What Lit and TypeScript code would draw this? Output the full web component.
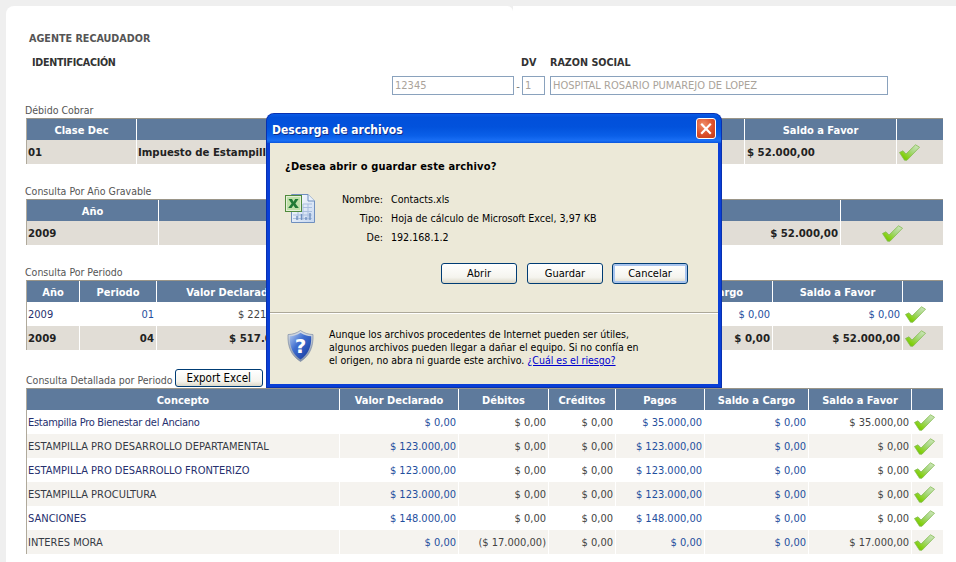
import { LitElement, html, css, svg } from "lit";
import { customElement } from "lit/decorators.js";

const check = () => html`<svg class="ok" width="21" height="17" viewBox="0 0 21 17">
  <defs><linearGradient id="g" x1="1" y1="0" x2="0" y2="1">
    <stop offset="0" stop-color="#d4e8c6"/><stop offset=".4" stop-color="#a8d880"/><stop offset=".75" stop-color="#84d010"/><stop offset="1" stop-color="#62b800"/></linearGradient></defs>
  <path d="M.5 8.5 4 6.8 7 10 16.5.8 20.5 3.2 8 16.2H5.5Z" fill="url(#g)" stroke="#84bb50" stroke-width=".8"/>
</svg>`;

type Cell = { t?: string; c?: string; ok?: boolean };
type Tbl = { cols: number[]; head: string[]; rows: Cell[][]; rowClass?: string[] };

const b = "b", n = "n", d = "d";
const t1: Tbl = {
  cols: [109, 463, 145, 152, 47],
  head: ["Clase Dec", "", "", "Saldo a Favor", ""],
  rowClass: ["strong"],
  rows: [[{ t: "01" }, { t: "Impuesto de Estampilla" }, {}, { t: "$ 52.000,00", c: "s1" }, { ok: true }]],
};
const t2: Tbl = {
  cols: [131, 682, 103],
  head: ["Año", "", ""],
  rowClass: ["strong"],
  rows: [[{ t: "2009" }, { t: "$ 52.000,00", c: "r" }, { ok: true, c: "mid" }]],
};
const t3: Tbl = {
  cols: [52, 77, 148, 108, 100, 124, 136, 130, 41],
  head: ["Año", "Periodo", "Valor Declarado", "", "", "", "Saldo a Cargo", "Saldo a Favor", ""],
  rowClass: ["", "strong"],
  rows: [
    [{ t: "2009", c: n }, { t: "01", c: "r " + b }, { t: "$ 221.000,00", c: "r pv " + d }, {}, {}, {}, { t: "$ 0,00", c: "r " + b }, { t: "$ 0,00", c: "r " + b }, { ok: true }],
    [{ t: "2009" }, { t: "04", c: "r" }, { t: "$ 517.000,00", c: "r pv" }, {}, {}, {}, { t: "$ 0,00", c: "r" }, { t: "$ 52.000,00", c: "r" }, { ok: true }],
  ],
};
const row4 = (name: string, vals: string[], nc = n): Cell[] => [
  { t: name, c: nc },
  { t: vals[0], c: "r " + b }, { t: vals[1], c: "r " + d }, { t: vals[2], c: "r " + d },
  { t: vals[3], c: "r " + b }, { t: vals[4], c: "r " + b }, { t: vals[5], c: "r " + d }, { ok: true },
];
const t4: Tbl = {
  cols: [312, 119, 90, 67, 89, 104, 103, 32],
  head: ["Concepto", "Valor Declarado", "Débitos", "Créditos", "Pagos", "Saldo a Cargo", "Saldo a Favor", ""],
  rowClass: ["", "alt", "", "alt", "", "alt"],
  rows: [
    row4("Estampilla Pro Bienestar del Anciano", ["$ 0,00", "$ 0,00", "$ 0,00", "$ 35.000,00", "$ 0,00", "$ 35.000,00"], "n tight"),
    row4("ESTAMPILLA PRO DESARROLLO DEPARTAMENTAL", ["$ 123.000,00", "$ 0,00", "$ 0,00", "$ 123.000,00", "$ 0,00", "$ 0,00"], "k"),
    row4("ESTAMPILLA PRO DESARROLLO FRONTERIZO", ["$ 123.000,00", "$ 0,00", "$ 0,00", "$ 123.000,00", "$ 0,00", "$ 0,00"]),
    row4("ESTAMPILLA PROCULTURA", ["$ 123.000,00", "$ 0,00", "$ 0,00", "$ 123.000,00", "$ 0,00", "$ 0,00"], "k"),
    row4("SANCIONES", ["$ 148.000,00", "$ 0,00", "$ 0,00", "$ 148.000,00", "$ 0,00", "$ 0,00"]),
    row4("INTERES MORA", ["$ 0,00", "($ 17.000,00)", "$ 0,00", "$ 0,00", "$ 0,00", "$ 17.000,00"], "k"),
  ],
};

const excelIcon = html`<svg width="31" height="31" viewBox="0 0 31 31">
  <defs><linearGradient id="pg" x1="0" y1="0" x2="1" y2="1"><stop offset="0" stop-color="#ffffff"/><stop offset="1" stop-color="#c4d6f0"/></linearGradient></defs>
  <path d="M6.5 1.5H23L29.5 8V29.5H6.5Z" fill="url(#pg)" stroke="#6f8fbe"/>
  <path d="M23 1.5V8H29.5" fill="#e8f0fb" stroke="#6f8fbe"/>
  <path d="M18 11H27M18 14.5H27M8 18.5H27M8 22H27M8 25.5H27M13 18V27M18 11V27M23 11V27" stroke="#a9bfe0" fill="none"/>
  <path d="M12 27V23M16.5 27V21M21 27V24M25 27V20" stroke="#6f8fbe" stroke-width="1.4" fill="none"/>
  <rect x=".5" y="2.5" width="16" height="16" fill="#e4efd8" stroke="#4f8a3c"/>
  <rect x="2" y="4" width="13" height="13" fill="#bfe0a8"/>
  <path d="M3.5 6H7L8.5 8.7 10.2 6H13.5L10.4 10.5 13.8 15H10.2L8.4 12.2 6.6 15H3.2L6.6 10.5Z" fill="#1f7a34"/>
</svg>`;

const shieldIcon = html`<svg width="27" height="32" viewBox="0 0 27 32">
  <defs>
    <linearGradient id="sh" x1="0" y1="0" x2="1" y2="1"><stop offset="0" stop-color="#b7cdf0"/><stop offset=".4" stop-color="#3f6fd0"/><stop offset="1" stop-color="#12339a"/></linearGradient>
    <linearGradient id="sh2" x1="0" y1="0" x2="0" y2="1"><stop offset="0" stop-color="#d8dfe8"/><stop offset="1" stop-color="#7f8ea8"/></linearGradient>
  </defs>
  <path d="M13.5.5C17 3 21 4.3 26 4.6 26.6 17 22.5 26 13.5 31.5 4.5 26 .4 17 1 4.6 6 4.3 10 3 13.5.5Z" fill="url(#sh2)" stroke="#70829e" stroke-width=".6"/>
  <path d="M13.5 2.8C16.8 5 20.4 6 24.2 6.3 24.6 17 21 24.8 13.5 29.4 6 24.8 2.4 17 2.8 6.3 6.6 6 10.2 5 13.5 2.8Z" fill="url(#sh)"/>
  <text x="13.5" y="23" text-anchor="middle" font-family="'DejaVu Sans',sans-serif" font-weight="700" font-size="20" fill="#ffffff">?</text>
</svg>`;

const closeIcon = svg`<path d="M5.5 5.5 14.5 15M14.5 5.5 5.5 15" stroke="#fff" stroke-width="2.4" stroke-linecap="square" fill="none"/>`;

@customElement("app-root")
export class AppRoot extends LitElement {
  static styles = css`
    :host { display: block; position: relative; width: 956px; height: 562px; overflow: hidden; background: #efefef; font-family: "DejaVu Sans Condensed", "DejaVu Sans", sans-serif; font-size: 11px; color: #333; }
    .page { position: relative; margin: 6px 0 0 6px; height: 556px; box-sizing: border-box; padding: 26px 13px 0 20px; background: #fff; border-top-left-radius: 8px; display: flex; flex-direction: column; }
    .notch { position: absolute; left: 501px; top: 0; width: 6px; height: 6px; background: radial-gradient(circle at 0 100%, #fff 5.5px, #efefef 6.5px); }
    .agent { height: 13px; line-height: 13px; margin-left: 3px; font-weight: 700; font-size: 10.7px; color: #555; }
    .form { display: grid; grid-template-columns: 366px 122px 8px 23px 5px 338px; grid-template-rows: 14px 19px; row-gap: 6px; margin-top: 11px; height: 39px; }
    .form .lab { grid-row: 1; font-weight: 700; font-size: 10.7px; color: #333; line-height: 14px; white-space: nowrap; }
    .lab.id { padding-left: 6px; grid-column: 1; letter-spacing: -.3px; }
    .lab.dv { grid-column: 3 / 5; padding-left: 7px; }
    .lab.rz { grid-column: 6; }
    .sep { grid-column: 3; grid-row: 2; text-align: center; line-height: 21px; color: #777; }
    input { box-sizing: border-box; width: 100%; height: 19px; margin: 0; padding: 0 2px; border: 1px solid #8aa2bd; background: #fff; color: #aaa39a; font: inherit; }
    .in1 { grid-column: 2; grid-row: 2; } .in2 { grid-column: 4; grid-row: 2; } .in3 { grid-column: 6; grid-row: 2; }
    .cap { display: flex; align-items: flex-end; height: 14px; box-sizing: border-box; padding-bottom: 1px; line-height: 14px; color: #555; font-size: 10.5px; margin-left: -1px; }
    .cap.first { margin-top: 9px; } .cap.next { margin-top: 21px; }
    .cap.exp { height: 19px; margin-top: 19px; align-items: flex-end; gap: 2px; line-height: 13px; margin-left: 0; }
    .xp { box-sizing: border-box; border: 1px solid #003c74; border-radius: 3px; background: linear-gradient(#fff, #f5f4ee 70%, #dcd8c8); color: #000; font: inherit; padding: 0; text-align: center; }
    .exp .xp { width: 88px; height: 18px; align-self: flex-start; font-size: 11.5px; }
    table { border-collapse: separate; border-spacing: 0; table-layout: fixed; width: 917px; border-top: 1px solid #9a9588; border-left: 1px solid #b0aa9c; }
    th { height: 21px; box-sizing: border-box; padding: 1px 0 0; background: #5e7a9c; color: #fff; font-weight: 700; font-size: 11px; border-left: 1px solid #fff; text-align: center; white-space: nowrap; overflow: hidden; }
    th:first-child { border-left: none; }
    td { height: 24px; padding: 0 2px 0 1px; box-sizing: border-box; border-left: 1px solid #fff; white-space: nowrap; overflow: hidden; color: #333; }
    td:first-child { border-left: none; }
    td.r { text-align: right; }
    td.pv { padding-right: 0; }
    td.s1 { padding-left: 2px; }
    td.b { color: #1f4f9e; } td.d { color: #444; } td.n { color: #26306e; } td.k { color: #353b45; }
    td.tight { letter-spacing: -.28px; }
    td.chk { padding: 0 0 0 2px; line-height: 0; }
    td.mid { text-align: center; padding: 0; }
    tr.strong td { background: #e1ddd6; font-weight: 700; font-size: 11.3px; color: #222; }
    tr.alt td { background: #f5f3ef; }
    .ok { vertical-align: middle; }
    .dlg { position: absolute; left: 267px; top: 114px; width: 454px; height: 273px; box-sizing: border-box; display: flex; flex-direction: column; border-radius: 7px 7px 0 0; background: #0a3fd6; padding: 0 3px 3px; box-shadow: 0 0 0 1px #0831b0; }
    .title { margin: 0 -3px; height: 29px; flex: none; border-radius: 7px 7px 0 0; background: linear-gradient(#0a5be6, #0250da 12%, #0252dc 45%, #0a5fe8 75%, #1a6ff5 92%, #0a55dc); display: flex; align-items: center; justify-content: space-between; padding: 0 5px; }
    .title span { color: #fff; font-weight: 700; font-size: 12px; text-shadow: 1px 1px 0 #0f2e8c; margin-top: 3px; }
    .close { width: 20px; height: 21px; box-sizing: border-box; border: 1px solid #fff; border-radius: 3px; background: radial-gradient(circle at 35% 30%, #f0906a, #dc4f2a 55%, #c23a18); display: block; }
    .close svg { display: block; margin: 0; }
    .body { flex: 1; background: #ece9d8; color: #000; display: flex; flex-direction: column; }
    .q { margin: 17px 0 0 15px; height: 14px; line-height: 14px; font-weight: 700; font-size: 11px; letter-spacing: .15px; }
    .info { display: flex; margin: 19px 0 0 15px; height: 57px; }
    .rows { display: grid; grid-template-columns: 67px auto; grid-auto-rows: 19px; column-gap: 8px; align-content: start; margin-top: -3px; line-height: 19px; font-size: 10.6px; }
    .rows .k { text-align: right; }
    .icon { width: 31px; height: 31px; }
    .btns { display: flex; margin: 13px 0 0 171px; gap: 10px; }
    .btns .xp { width: 76px; height: 21px; font-size: 11px; }
    .btns .xp.focus { margin-left: -1px; box-shadow: inset 0 0 0 2px #a8c4ee; }
    .rule { margin-top: 28px; height: 0; border-top: 1px solid #aca899; border-bottom: 1px solid #fff; }
    .foot { display: flex; margin: 16px 0 0 17px; }
    .foot p { margin: -2px 0 0 15px; line-height: 13px; font-size: 10.5px; white-space: nowrap; }
    a { color: #0000d0; text-decoration: underline; }
  `;

  private table(t: Tbl) {
    return html`<table>
      <colgroup>${t.cols.map((w) => html`<col style="width:${w}px" />`)}</colgroup>
      <thead><tr>${t.head.map((h) => html`<th>${h}</th>`)}</tr></thead>
      <tbody>${t.rows.map((r, i) => html`<tr class=${t.rowClass?.[i] ?? ""}>${r.map((c) =>
        c.ok ? html`<td class="chk ${c.c ?? ""}">${check()}</td>` : html`<td class=${c.c ?? ""}>${c.t ?? ""}</td>`
      )}</tr>`)}</tbody>
    </table>`;
  }

  render() {
    return html`
      <div class="page">
        <div class="notch"></div>
        <div class="agent">AGENTE RECAUDADOR</div>
        <div class="form">
          <div class="lab id">IDENTIFICACIÓN</div>
          <div class="lab dv">DV</div>
          <div class="lab rz">RAZON SOCIAL</div>
          <input class="in1" readonly value="12345" />
          <div class="sep">-</div>
          <input class="in2" readonly value="1" />
          <input class="in3" readonly value="HOSPITAL ROSARIO PUMAREJO DE LOPEZ" />
        </div>
        <div class="cap first">Débido Cobrar</div>
        ${this.table(t1)}
        <div class="cap next">Consulta Por Año Gravable</div>
        ${this.table(t2)}
        <div class="cap next">Consulta Por Periodo</div>
        ${this.table(t3)}
        <div class="cap exp">Consulta Detallada por Periodo<button class="xp">Export Excel</button></div>
        ${this.table(t4)}
      </div>
      <div class="dlg">
        <div class="title"><span>Descarga de archivos</span>
          <div class="close"><svg width="18" height="19" viewBox="0 0 20 20">${closeIcon}</svg></div>
        </div>
        <div class="body">
          <div class="q">¿Desea abrir o guardar este archivo?</div>
          <div class="info">
            <div class="icon">${excelIcon}</div>
            <div class="rows">
              <span class="k">Nombre:</span><span>Contacts.xls</span>
              <span class="k">Tipo:</span><span>Hoja de cálculo de Microsoft Excel, 3,97 KB</span>
              <span class="k">De:</span><span>192.168.1.2</span>
            </div>
          </div>
          <div class="btns">
            <button class="xp">Abrir</button><button class="xp">Guardar</button><button class="xp focus">Cancelar</button>
          </div>
          <div class="rule"></div>
          <div class="foot">
            ${shieldIcon}
            <p>Aunque los archivos procedentes de Internet pueden ser útiles,<br />algunos archivos pueden llegar a dañar el equipo. Si no confía en<br />el origen, no abra ni guarde este archivo. <a>¿Cuál es el riesgo?</a></p>
          </div>
        </div>
      </div>
    `;
  }
}
